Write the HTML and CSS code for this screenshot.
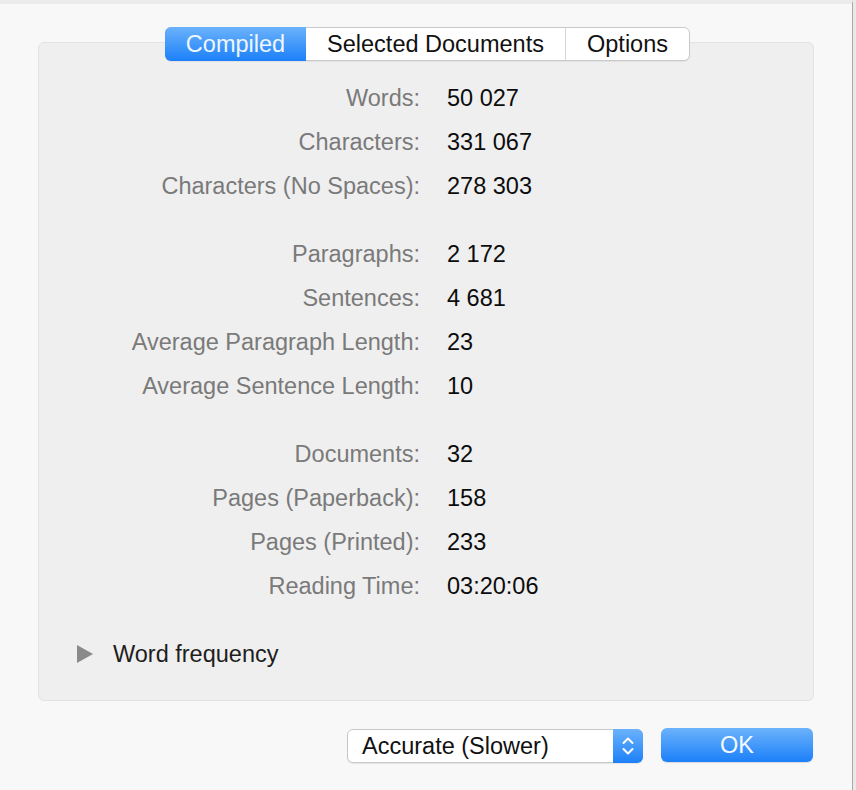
FILE: index.html
```html
<!DOCTYPE html>
<html>
<head>
<meta charset="utf-8">
<link rel="stylesheet" href="styles.css">
</head>
<body>
<div class="window">
  <div class="panel">
    <div class="tabs">
      <div class="tab active compiled">Compiled</div>
      <div class="tab selected">Selected Documents</div>
      <div class="tab options">Options</div>
    </div>
    <div class="stats">
      <div class="group">
        <div class="label">Words:</div><div class="value">50 027</div>
        <div class="label">Characters:</div><div class="value">331 067</div>
        <div class="label">Characters (No Spaces):</div><div class="value">278 303</div>
      </div>
      <div class="group">
        <div class="label">Paragraphs:</div><div class="value">2 172</div>
        <div class="label">Sentences:</div><div class="value">4 681</div>
        <div class="label">Average Paragraph Length:</div><div class="value">23</div>
        <div class="label">Average Sentence Length:</div><div class="value">10</div>
      </div>
      <div class="group">
        <div class="label">Documents:</div><div class="value">32</div>
        <div class="label">Pages (Paperback):</div><div class="value">158</div>
        <div class="label">Pages (Printed):</div><div class="value">233</div>
        <div class="label">Reading Time:</div><div class="value">03:20:06</div>
      </div>
    </div>
    <div class="disclosure">
      <span class="triangle"></span>
      <span class="disc-label">Word frequency</span>
    </div>
  </div>
  <div class="footer">
    <div class="popup">
      <span class="popup-text">Accurate (Slower)</span>
      <span class="stepper">
        <svg width="14" height="22" viewBox="0 0 14 22"><path d="M2.5 8 L7 3.5 L11.5 8 M2.5 14 L7 18.5 L11.5 14" fill="none" stroke="#fff" stroke-width="2" stroke-linecap="round" stroke-linejoin="round"/></svg>
      </span>
    </div>
    <div class="ok">OK</div>
  </div>
</div>
</body>
</html>
```
FILE: styles.css
```css
html, body {
  margin: 0;
  padding: 0;
}
body {
  background: #e9e9e9;
  font-family: "Liberation Sans", Arial, sans-serif;
  font-size: 23.5px;
  width: 856px;
  height: 790px;
  overflow: hidden;
}
.window {
  width: 853px;
  height: 790px;
  box-sizing: border-box;
  background: #f8f8f8;
  border-top: 4px solid #ebebeb;
  border-right: 1px solid #a9a9a9;
  padding-top: 38px;
}
.panel {
  margin-left: 38px;
  width: 776px;
  height: 659px;
  box-sizing: border-box;
  background: #efefef;
  border: 1px solid #e2e2e2;
  border-radius: 6px;
  display: flex;
  flex-direction: column;
}
.tabs {
  align-self: center;
  margin-top: -16px;
  margin-left: 3px;
  display: flex;
  height: 34px;
  box-sizing: border-box;
  background: #fff;
  border: 1px solid #c9c9c9;
  border-radius: 6px;
  box-shadow: 0 1px 1px rgba(0,0,0,0.06);
}
.tab {
  box-sizing: border-box;
  text-align: center;
  line-height: 32px;
  color: #111;
  border-left: 1px solid #d6d6d6;
}
.tab.compiled {
  width: 141px;
}
.tab.selected {
  width: 259px;
}
.tab.options {
  width: 124px;
}
.tab.active {
  margin: -1px 0 -1px -1px;
  border-left: none;
  line-height: 34px;
  color: #eef6ff;
  background: linear-gradient(#6bb2fb, #1c80f9);
  border-radius: 6px 0 0 6px;
}
.tab.active + .tab {
  border-left: none;
}
.stats {
  padding-top: 15px;
  display: flex;
  flex-direction: column;
  gap: 24px;
}
.group {
  display: grid;
  grid-template-columns: 381px auto;
  column-gap: 27px;
  grid-auto-rows: 44px;
  align-items: center;
}
.label {
  text-align: right;
  color: #7a7a7a;
}
.value {
  color: #0c0c0c;
}
.disclosure {
  margin-top: 24px;
  height: 44px;
  display: flex;
  align-items: center;
  padding-left: 38px;
}
.triangle {
  width: 0;
  height: 0;
  border-top: 9px solid transparent;
  border-bottom: 9px solid transparent;
  border-left: 16px solid #8a8a8a;
  margin-right: 20px;
}
.disc-label {
  color: #1e1e1e;
}
.footer {
  margin-top: 27px;
  display: flex;
  justify-content: flex-end;
  gap: 18px;
  padding-right: 39px;
  align-items: flex-start;
}
.popup {
  margin-top: 1px;
  width: 296px;
  height: 34px;
  box-sizing: border-box;
  background: #fff;
  border: 1px solid #c9c9c9;
  border-radius: 6px;
  display: flex;
  box-shadow: 0 1px 1px rgba(0,0,0,0.08);
}
.popup-text {
  flex: 1;
  padding-left: 14px;
  line-height: 32px;
  color: #111;
}
.stepper {
  width: 30px;
  margin: -1px -1px -1px 0;
  background: linear-gradient(#6bb2fb, #1c80f9);
  border-radius: 0 6px 6px 0;
  display: flex;
  align-items: center;
  justify-content: center;
}
.ok {
  width: 152px;
  height: 34px;
  line-height: 34px;
  text-align: center;
  color: #f4f9ff;
  background: linear-gradient(#6bb2fb, #1c80f9);
  border-radius: 6px;
  box-shadow: 0 1px 1px rgba(0,0,0,0.12);
}
```
